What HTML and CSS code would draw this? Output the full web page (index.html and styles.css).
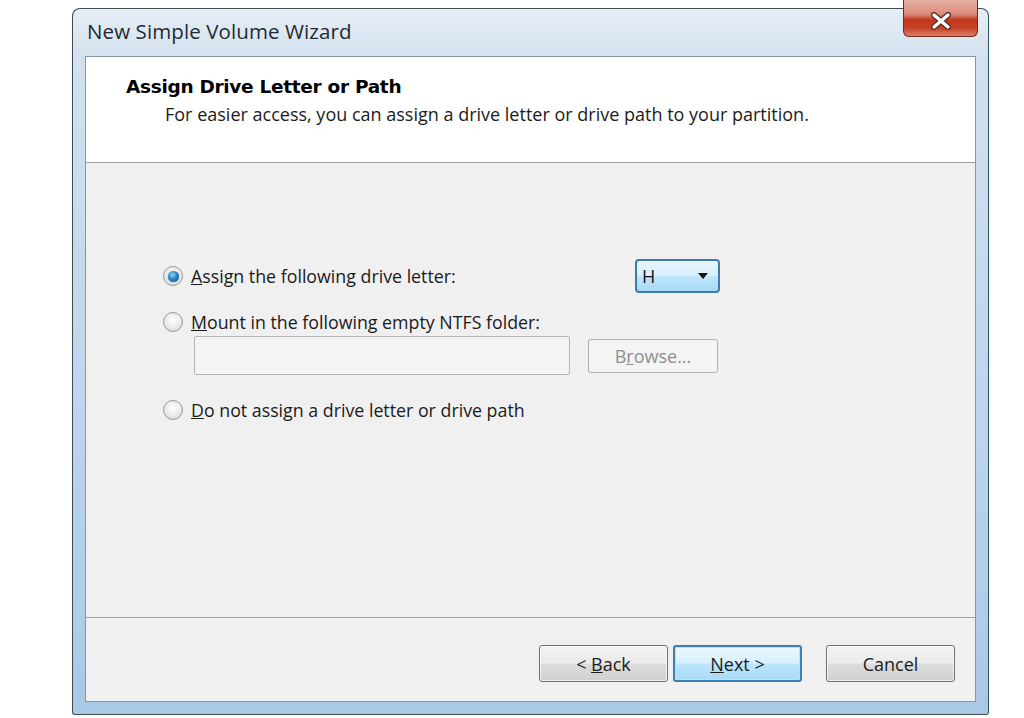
FILE: index.html
```html
<!DOCTYPE html>
<html lang="en">
<head>
    <meta charset="UTF-8">
    <meta name="viewport" content="width=device-width, initial-scale=1.0">
    <title>New Simple Volume Wizard</title>
    <link rel="stylesheet" href="styles.css">
</head>
<body>
    <div class="window">
        <div class="titlebar">
            <span class="title">New Simple Volume Wizard</span>
            <div class="close-btn">
                <svg width="26" height="18" viewBox="0 0 26 18">
                    <path d="M6 3 L20 15 M20 3 L6 15" stroke="#5a2a22" stroke-width="6" stroke-linecap="round"/>
                    <path d="M6 3 L20 15 M20 3 L6 15" stroke="#ffffff" stroke-width="3.4" stroke-linecap="round"/>
                </svg>
            </div>
        </div>

        <div class="client">
            <div class="header">
                <h1>Assign Drive Letter or Path</h1>
                <p>For easier access, you can assign a drive letter or drive path to your partition.</p>
            </div>

            <div class="content">
                <div class="option first">
                    <span class="radio checked"></span>
                    <span class="label"><u>A</u>ssign the following drive letter:</span>
                    <div class="combo">
                        <span>H</span>
                        <svg width="10" height="6" viewBox="0 0 10 6"><path d="M0 0 L10 0 L5 6 Z" fill="#111"/></svg>
                    </div>
                </div>

                <div class="option">
                    <span class="radio"></span>
                    <span class="label"><u>M</u>ount in the following empty NTFS folder:</span>
                </div>
                <div class="folder-row">
                    <div class="textbox"></div>
                    <div class="btn disabled">B<u>r</u>owse...</div>
                </div>

                <div class="option last">
                    <span class="radio"></span>
                    <span class="label"><u>D</u>o not assign a drive letter or drive path</span>
                </div>
            </div>

            <div class="footer">
                <div class="btn">&lt;&nbsp;<u>B</u>ack</div>
                <div class="btn default"><u>N</u>ext&nbsp;&gt;</div>
                <div class="btn cancel">Cancel</div>
            </div>
        </div>
    </div>
</body>
</html>
```

FILE: styles.css
```css
body {
    margin: 0;
    background-color: #ffffff;
    font-family: "Open Sans", "Noto Sans", Arial, sans-serif;
    color: #1b1b1b;
}
.window {
    box-sizing: border-box;
    width: 917px;
    height: 707px;
    margin: 8px 0 0 72px;
    padding: 0 12px 12px 12px;
    border: 1px solid #3e4a55;
    border-right-color: #28506a;
    border-radius: 8px 8px 3px 3px;
    background: linear-gradient(180deg, #e6eef5 0px, #d3e1ee 48px, #bcd4ec 60%, #a9c8e6 100%);
    display: flex;
    flex-direction: column;
}
.titlebar {
    height: 47px;
    display: flex;
    justify-content: space-between;
}
.title {
    font-size: 20.5px;
    color: #1e2a33;
    padding: 8px 0 0 2px;
    letter-spacing: 0.1px;
}
.close-btn {
    box-sizing: border-box;
    width: 75px;
    height: 37px;
    margin: -9px -2px 0 0;
    border: 1px solid #6b2b22;
    border-top: none;
    border-radius: 0 0 6px 6px;
    background: linear-gradient(180deg, #e8b1a6 0%, #d98a7b 40%, #c2361c 55%, #c8432a 78%, #dd7d62 100%);
    display: flex;
    align-items: center;
    justify-content: center;
    padding-top: 6px;
}
.client {
    box-sizing: border-box;
    flex: 1;
    border: 1px solid #8b969f;
    background-color: #f0f0f0;
    display: flex;
    flex-direction: column;
}
.header {
    height: 105px;
    background-color: #ffffff;
    border-bottom: 1px solid #a0a0a0;
    box-sizing: content-box;
}
.header h1 {
    margin: 0;
    padding: 19px 0 0 40px;
    font-family: "DejaVu Sans", Verdana, sans-serif;
    font-size: 18.5px;
    line-height: 22px;
    font-weight: bold;
    color: #000000;
    letter-spacing: -0.3px;
}
.header p {
    margin: 5px 0 0 79px;
    font-size: 18px;
    line-height: 22px;
    color: #1b1b1b;
}
.content {
    flex: 1;
    padding: 96px 0 0 77px;
}
.option {
    display: flex;
    align-items: center;
    height: 20px;
    margin-top: 19px;
}
.option.first {
    height: 34px;
    margin-top: 0;
}
.option.last {
    margin-top: 25px;
}
.label {
    font-size: 17.8px;
    margin-left: 8px;
}
.option.first .label {
    width: 444px;
}
.radio {
    box-sizing: border-box;
    width: 20px;
    height: 20px;
    border-radius: 50%;
    border: 1px solid #9a9a9a;
    background: radial-gradient(circle at 50% 40%, #ffffff 0%, #eeeeee 45%, #cfcfcf 100%);
    display: flex;
    align-items: center;
    justify-content: center;
}
.radio.checked::after {
    content: "";
    width: 11px;
    height: 11px;
    border-radius: 50%;
    background: radial-gradient(circle at 40% 35%, #8fd2f5 0%, #2a86c1 45%, #0d4d7f 100%);
    box-shadow: 0 0 1px #1c5f8f;
}
.combo {
    box-sizing: border-box;
    width: 85px;
    height: 34px;
    border: 2px solid #3d7bad;
    border-radius: 4px;
    background: linear-gradient(180deg, #e8f5fd 0%, #d9f0fc 48%, #bee6fd 52%, #a7d9f5 100%);
    display: flex;
    align-items: center;
    justify-content: space-between;
    padding: 0 10px 0 5px;
    font-size: 18px;
    color: #111;
}
.folder-row {
    display: flex;
    align-items: center;
    margin: 4px 0 0 31px;
}
.textbox {
    box-sizing: border-box;
    width: 376px;
    height: 39px;
    border: 1px solid #b5b5b5;
    border-radius: 2px;
    background-color: #f4f4f4;
}
.btn {
    box-sizing: border-box;
    width: 129px;
    height: 37px;
    border: 1px solid #707070;
    border-radius: 3px;
    background: linear-gradient(180deg, #f2f2f2 0%, #ebebeb 48%, #dddddd 52%, #cfcfcf 100%);
    box-shadow: inset 0 0 0 1px rgba(255,255,255,0.7);
    display: flex;
    align-items: center;
    justify-content: center;
    font-size: 18px;
    color: #1b1b1b;
}
.btn.disabled {
    width: 130px;
    height: 34px;
    margin-left: 18px;
    border-color: #adb2b5;
    background: #f4f4f4;
    box-shadow: none;
    color: #8f8f8f;
}
.footer {
    box-sizing: border-box;
    height: 84px;
    border-top: 1px solid #a0a0a0;
    display: flex;
    justify-content: flex-end;
    align-items: flex-start;
    padding: 27px 20px 0 0;
}
.btn.default {
    margin-left: 5px;
    border: 2px solid #3c7fb1;
    background: linear-gradient(180deg, #eaf6fd 0%, #d9f0fc 48%, #bee6fd 52%, #a7d9f5 100%);
    box-shadow: inset 0 0 0 1px #b6e4fa;
}
.btn.cancel {
    margin-left: 24px;
}
```
